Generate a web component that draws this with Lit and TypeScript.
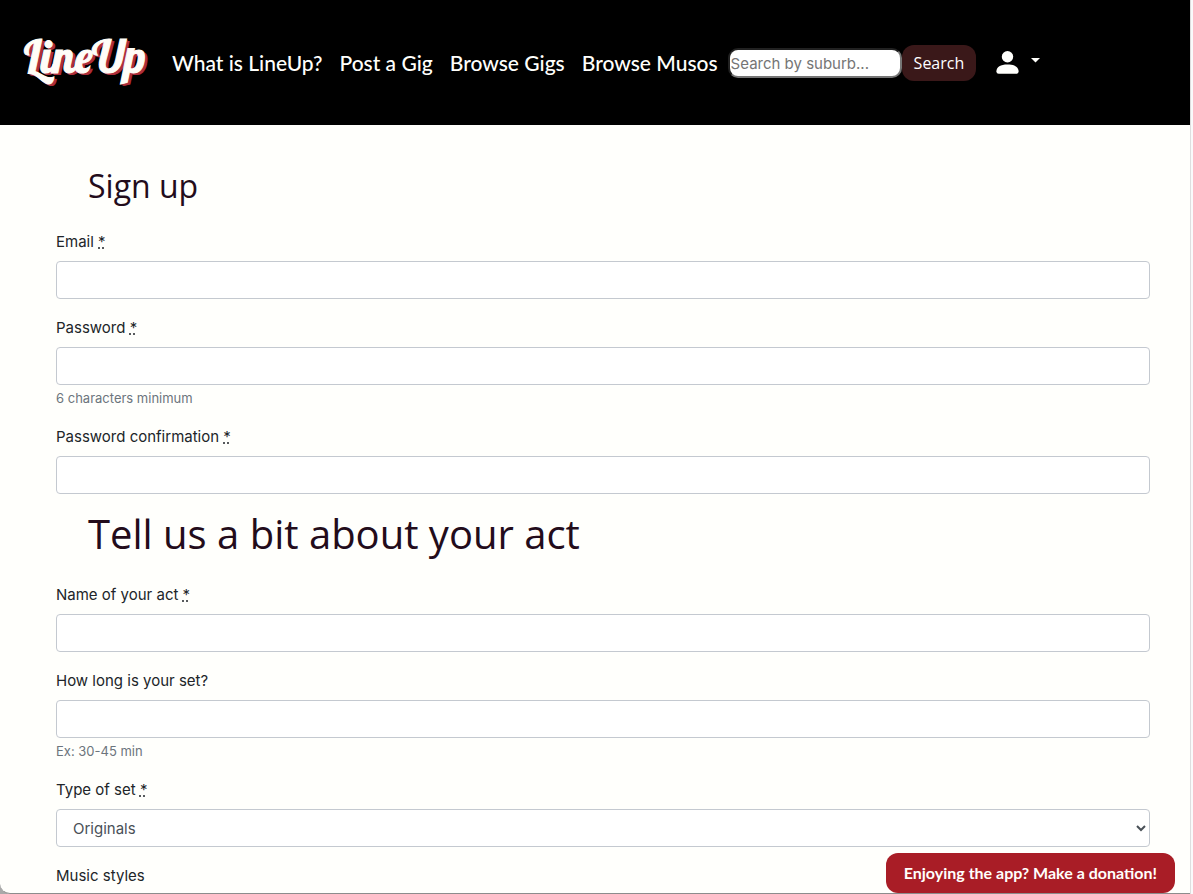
import { LitElement, html, css, nothing } from "lit";
import { customElement, property } from "lit/decorators.js";

@customElement("form-field")
class FormField extends LitElement {
  @property() label = "";
  @property() type = "text";
  @property() hint = "";
  @property({ type: Boolean }) required = false;
  @property({ type: Array }) options: string[] = [];

  static styles = css`
    :host {
      display: block;
      margin-bottom: 16px;
    }
    .label {
      display: block;
      margin-bottom: 6px;
      line-height: 26px;
    }
    .mark {
      text-decoration: underline dotted;
    }
    .control {
      display: block;
      box-sizing: border-box;
      width: 100%;
      height: 38px;
      margin: 0;
      padding: 6px 12px;
      border: 1px solid #c4c9d0;
      border-radius: 4px;
      background: #fff;
      color: #495057;
      font: inherit;
    }
    .hint {
      display: block;
      margin-top: 4px;
      font-size: 13px;
      line-height: 19px;
      color: #6c757d;
    }
  `;

  render() {
    return html`
      <label class="label" for="control"
        >${this.label}
        ${this.required ? html`<abbr class="mark" title="required">*</abbr>` : nothing}</label
      >
      ${this.options.length
        ? html`<select class="control" id="control">
            ${this.options.map((o) => html`<option>${o}</option>`)}
          </select>`
        : html`<input class="control" id="control" type=${this.type} ?required=${this.required} />`}
      ${this.hint ? html`<small class="hint">${this.hint}</small>` : nothing}
    `;
  }
}

@customElement("site-header")
class SiteHeader extends LitElement {
  static styles = css`
    :host {
      display: block;
      background: #000;
      color: #fffffc;
    }
    .bar {
      display: flex;
      align-items: center;
      box-sizing: border-box;
      min-height: 125px;
      padding: 0 24px;
    }
    .logo {
      width: 124px;
      margin-right: 16px;
      padding-bottom: 14px;
      color: #fffdf8;
      font: 45px/56px Lobster, "Liberation Serif", serif;
      -webkit-text-stroke: 1px #fffdf8;
      text-shadow: 1px 1px #ad2e3b, 2px 2px #ad2e3b, 3px 2px #ad2e3b;
      text-decoration: none;
      white-space: nowrap;
    }
    .links {
      display: flex;
      gap: 1px;
      margin: 0;
      padding: 0;
      list-style: none;
    }
    .link {
      display: block;
      padding: 8px;
      color: inherit;
      font: 500 21px/32px Lato, sans-serif;
      text-decoration: none;
      white-space: nowrap;
    }
    .search {
      display: flex;
      align-items: center;
      margin-left: 2px;
    }
    .query {
      box-sizing: border-box;
      width: 174px;
      height: 30px;
      margin: 0;
      padding: 2px 1px 0;
      border: 2px inset #767676;
      border-radius: 10px;
      background: #fff;
      font: 15px/24px Inter, sans-serif;
    }
    .query::placeholder {
      color: #757575;
    }
    .go {
      height: 36px;
      padding: 0 12px;
      border: 0;
      border-radius: 12px;
      background: #3a1819;
      color: #fff;
      font: 16px/24px "Open Sans", sans-serif;
    }
    .account {
      display: flex;
      align-items: center;
      gap: 12px;
      margin-left: 20px;
      padding: 0;
      border: 0;
      background: none;
      color: inherit;
    }
    .person {
      display: block;
      width: 23px;
      height: 23px;
    }
    .caret {
      display: block;
      width: 9px;
      height: 5px;
      margin-bottom: 5px;
    }
  `;

  render() {
    const links = ["What is LineUp?", "Post a Gig", "Browse Gigs", "Browse Musos"];
    return html`
      <header class="bar">
        <a class="logo" href="#">LineUp</a>
        <nav>
          <ul class="links">
            ${links.map((l) => html`<li><a class="link" href="#">${l}</a></li>`)}
          </ul>
        </nav>
        <form class="search" @submit=${(e: Event) => e.preventDefault()}>
          <input class="query" type="text" aria-label="Search by suburb" placeholder="Search by suburb..." />
          <button class="go" type="submit">Search</button>
        </form>
        <button class="account" type="button" aria-label="Account">
          <svg class="person" viewBox="0 0 23 23" fill="currentColor" aria-hidden="true">
            <circle cx="11.5" cy="5.7" r="5.7" />
            <path d="M.4 20.5C.4 15.8 4.5 13.4 11.5 13.4s11.100 2.400 11.100 7.100q0 2.300-2.300 2.300H2.700Q.4 22.800.4 20.500Z" />
          </svg>
          <svg class="caret" viewBox="0 0 9 5" fill="currentColor" aria-hidden="true">
            <path d="M0 0h9L4.500 4.500Z" />
          </svg>
        </button>
      </header>
    `;
  }
}

@customElement("app-root")
class AppRoot extends LitElement {
  static styles = css`
    :host {
      display: block;
      box-sizing: border-box;
      height: 100vh;
      overflow: hidden;
      padding-right: 3px;
      background: linear-gradient(to right, #a9a9a9 50%, #fafafb 50%);
    }
    .page {
      box-sizing: border-box;
      height: 100%;
      overflow: hidden;
      border-bottom: 1px solid #8c8c8c;
      border-bottom-left-radius: 10px;
      box-shadow: 1px 0 #dededf;
      background: #fffffc;
      color: #212529;
      font: 15px/24px Inter, sans-serif;
    }
    .content {
      padding: 42px 40px 42px 56px;
    }
    .title {
      margin: 0 0 24px;
      padding-left: 32px;
      color: #230c1b;
      font: 32px/38px "Open Sans", sans-serif;
    }
    .title-large {
      font-size: 40px;
      line-height: 48px;
    }
    .donate {
      position: fixed;
      right: 18px;
      bottom: 1px;
      padding: 8px 18px;
      border-radius: 12px;
      background: #a91d26;
      color: #fffffc;
      font: bold 16px/24px Lato, sans-serif;
      text-decoration: none;
    }
  `;

  render() {
    return html`
      <div class="page">
        <site-header></site-header>
        <main class="content">
          <h2 class="title">Sign up</h2>
          <form-field label="Email" type="email" required></form-field>
          <form-field label="Password" type="password" hint="6 characters minimum" required></form-field>
          <form-field label="Password confirmation" type="password" required></form-field>
          <h1 class="title title-large">Tell us a bit about your act</h1>
          <form-field label="Name of your act" required></form-field>
          <form-field label="How long is your set?" hint="Ex: 30-45 min"></form-field>
          <form-field label="Type of set" .options=${["Originals", "Covers"]} required></form-field>
          <form-field label="Music styles"></form-field>
        </main>
        <a class="donate" href="#">Enjoying the app? Make a donation!</a>
      </div>
    `;
  }
}
